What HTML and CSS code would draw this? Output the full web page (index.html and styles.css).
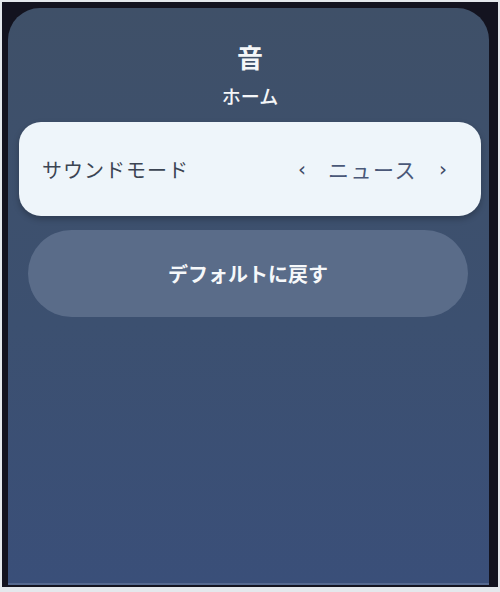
FILE: index.html
```html
<!DOCTYPE html>
<html lang="ja">
<head>
    <meta charset="UTF-8">
    <meta name="viewport" content="width=device-width, initial-scale=1.0">
    <title>音</title>
    <link rel="stylesheet" href="styles.css">
</head>
<body>

<div class="screen">
    <div class="panel">
        <!-- 見出し -->
        <div class="panel-head">
            <h1 class="title">音</h1>
            <p class="subtitle">ホーム</p>
        </div>

        <!-- サウンドモード選択 -->
        <div class="setting-row">
            <span class="setting-label">サウンドモード</span>
            <div class="picker">
                <span class="arrow">‹</span>
                <span class="picker-value">ニュース</span>
                <span class="arrow">›</span>
            </div>
        </div>

        <button class="reset-button">デフォルトに戻す</button>
    </div>
</div>

</body>
</html>
```

FILE: styles.css
```css
body {
    margin: 0;
    padding: 0;
    font-family: "Noto Sans CJK JP", "Noto Sans", sans-serif;
    background-color: #e4e8ec;
}

.screen {
    box-sizing: border-box;
    width: 500px;
    height: 592px;
    border: 2px solid #e4e8ec;
    border-bottom-width: 5px;
    background-color: #13131f; /* 外側の暗い縁 */
    padding: 6px 9px 2px 6px;
    display: flex;
}

.panel {
    flex: 1;
    background: linear-gradient(180deg, #3f5068 0%, #3c5070 55%, #3a4f79 100%);
    border-radius: 32px 32px 0 0;
    border-bottom: 2px solid #55698f;
    padding: 0 8px 0 11px;
    display: flex;
    flex-direction: column;
}

.panel-head {
    text-align: center;
    color: #f4f6f8;
    padding-top: 30px;
}

.title {
    margin: 0;
    font-size: 26px;
    font-weight: bold;
    line-height: 38px;
}

.subtitle {
    margin: 6px 0 0;
    font-size: 19px;
    font-weight: 500;
    line-height: 28px;
}

.setting-row {
    margin-top: 12px;
    height: 94px;
    background-color: #eef5fa;
    border-radius: 22px;
    box-shadow: 0 3px 6px rgba(0, 0, 0, 0.25);
    display: flex;
    align-items: center;
    justify-content: space-between;
    padding: 0 34px 0 23px;
}

.setting-label {
    font-size: 20px;
    color: #3b4452;
    letter-spacing: 1px;
}

.picker {
    display: flex;
    align-items: center;
    gap: 22px;
    color: #4a5878;
}

.arrow {
    font-family: "DejaVu Sans", sans-serif;
    font-size: 20px;
    color: #3e4a66;
}

.picker-value {
    font-size: 21px;
    letter-spacing: 1.5px;
}

.reset-button {
    margin: 14px 13px 0 9px;
    height: 87px;
    border: none;
    border-radius: 44px;
    background-color: #5a6c89;
    color: #f6f8fa;
    font-family: inherit;
    font-size: 20px;
    font-weight: bold;
    cursor: pointer;
}
```
